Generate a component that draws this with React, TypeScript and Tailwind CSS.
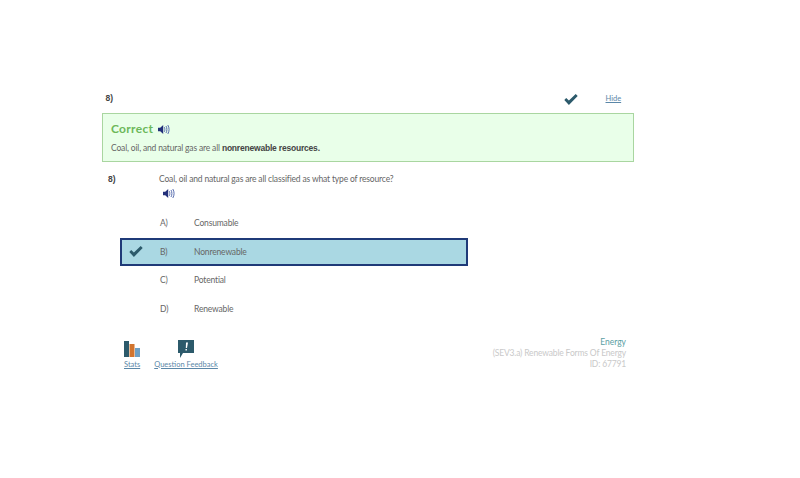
import React from 'react';

const font = { fontFamily: 'Lato, sans-serif' };
const boldFont = { fontFamily: '"Liberation Sans", sans-serif' };

function Speaker({ className }: { className?: string }) {
    return (
        <svg viewBox="0 0 12 11" className={className}>
            <path d="M0 3.800h2.200L5.200 1v9L2.200 7.200H0z" fill="#23307a" />
            <path d="M6.300 3.200c.7 1.400.7 3.200 0 4.600M8 2c1.200 2.200 1.200 4.800 0 7M9.800 1c1.700 2.800 1.700 6.200 0 9" fill="none" stroke="#5a6fb0" strokeWidth="1" />
        </svg>
    );
}

function Check({ className }: { className?: string }) {
    return (
        <svg viewBox="0 0 14 11" className={className}>
            <path d="M0.300 6l1.900-2 2.700 2.600L11.700 0l2 2-8.800 9z" fill="#2c5a6b" />
        </svg>
    );
}

const answers = [
    { key: 'A)', label: 'Consumable' },
    { key: 'B)', label: 'Nonrenewable', picked: true },
    { key: 'C)', label: 'Potential' },
    { key: 'D)', label: 'Renewable' },
];

export default function App() {
    return (
        <div className="h-[478px] w-[800px] overflow-hidden bg-white pl-[102px] pt-[91px] text-[8.5px] leading-[14px] tracking-[-0.16px] text-[#666]" style={font}>
            <div className="w-[532px]">
                {/* Header row */}
                <div className="flex h-[22px] items-start pb-[8px]">
                    <span className="ml-[3.500px] w-[458px] text-[8.500px] font-bold tracking-normal text-[#444]" style={boldFont}>8)</span>
                    <Check className="mt-[3px] h-[11px] w-[14px]" />
                    <a className="ml-[28px] mt-[1px] text-[7.500px] tracking-normal text-[#5b87a8] underline">Hide</a>
                </div>

                {/* Result box */}
                <div className="h-[49px] border border-[#a9d6a0] bg-[#e9ffe9] px-[8px] pt-[7px]">
                    <div className="flex items-center gap-[5px]">
                        <span className="text-[12px] font-bold leading-[16px] tracking-[0.3px] text-[#6cb85a]">Correct</span>
                        <Speaker className="h-[11px] w-[12px]" />
                    </div>
                    <p className="mt-[4px]">
                        Coal, oil, and natural gas are all <b className="text-[8.500px] font-bold tracking-[-0.2px] text-[#444]" style={boldFont}>nonrenewable resources.</b>
                    </p>
                </div>

                {/* Question */}
                <div className="mt-[10px] flex">
                    <span className="ml-[6px] w-[51px] text-[8.500px] font-bold tracking-normal text-[#444]" style={boldFont}>8)</span>
                    <div>
                        <p>Coal, oil and natural gas are all classified as what type of resource?</p>
                        <Speaker className="ml-[4px] mt-[2px] h-[11px] w-[12px]" />
                    </div>
                </div>

                {/* Answers */}
                <div className="ml-[18px] mt-[10px] flex w-[348px] flex-col gap-[0.500px]">
                    {answers.map((a) => (
                        <div
                            key={a.key}
                            className={`flex h-[28px] items-center ${a.picked ? 'border-2 border-[#1f3a78] bg-[#aad8e3]' : ''}`}
                        >
                            <span className={`flex justify-center ${a.picked ? 'ml-[6px] w-[16px]' : 'ml-[8px] w-[16px]'}`}>
                                {a.picked && <Check className="h-[11px] w-[14px]" />}
                            </span>
                            <span className="ml-[16px] w-[34px]">{a.key}</span>
                            <span>{a.label}</span>
                        </div>
                    ))}
                </div>

                {/* Footer */}
                <div className="mt-[14px] flex justify-between">
                    <div className="ml-[22px] mt-[2px] flex gap-[14px] text-[7.500px] tracking-normal">
                        <a className="flex flex-col items-center text-[#5b87a8] underline">
                            <svg viewBox="0 0 16 16" className="mt-[2px] h-[16px] w-[16px]">
                                <rect x="0" y="0" width="5" height="16" fill="#2c5a6b" />
                                <rect x="5.500" y="3" width="5" height="13" fill="#d2742e" />
                                <rect x="11" y="7" width="5" height="9" fill="#6d9fc4" />
                            </svg>
                            <span className="mt-[1px]">Stats</span>
                        </a>
                        <a className="flex flex-col items-center text-[#5b87a8] underline">
                            <svg viewBox="0 0 16 18" className="mt-[1px] h-[18px] w-[16px]">
                                <path d="M0 0h16v13H5l-3 5v-5H0z" fill="#2c5a6b" />
                                <path d="M8 2.500h2L9 8H7.800zM7.500 9h1.400v1.500H7.500z" fill="#fff" />
                            </svg>
                            <span>Question Feedback</span>
                        </a>
                    </div>
                    <div className="mr-[8px] text-right leading-[11px] text-[#c9c9c9]">
                        <div className="text-[8.500px] tracking-normal text-[#5b9ea3]">Energy</div>
                        <div>(SEV3.a) Renewable Forms Of Energy</div>
                        <div>ID: 67791</div>
                    </div>
                </div>
            </div>
        </div>
    );
}
